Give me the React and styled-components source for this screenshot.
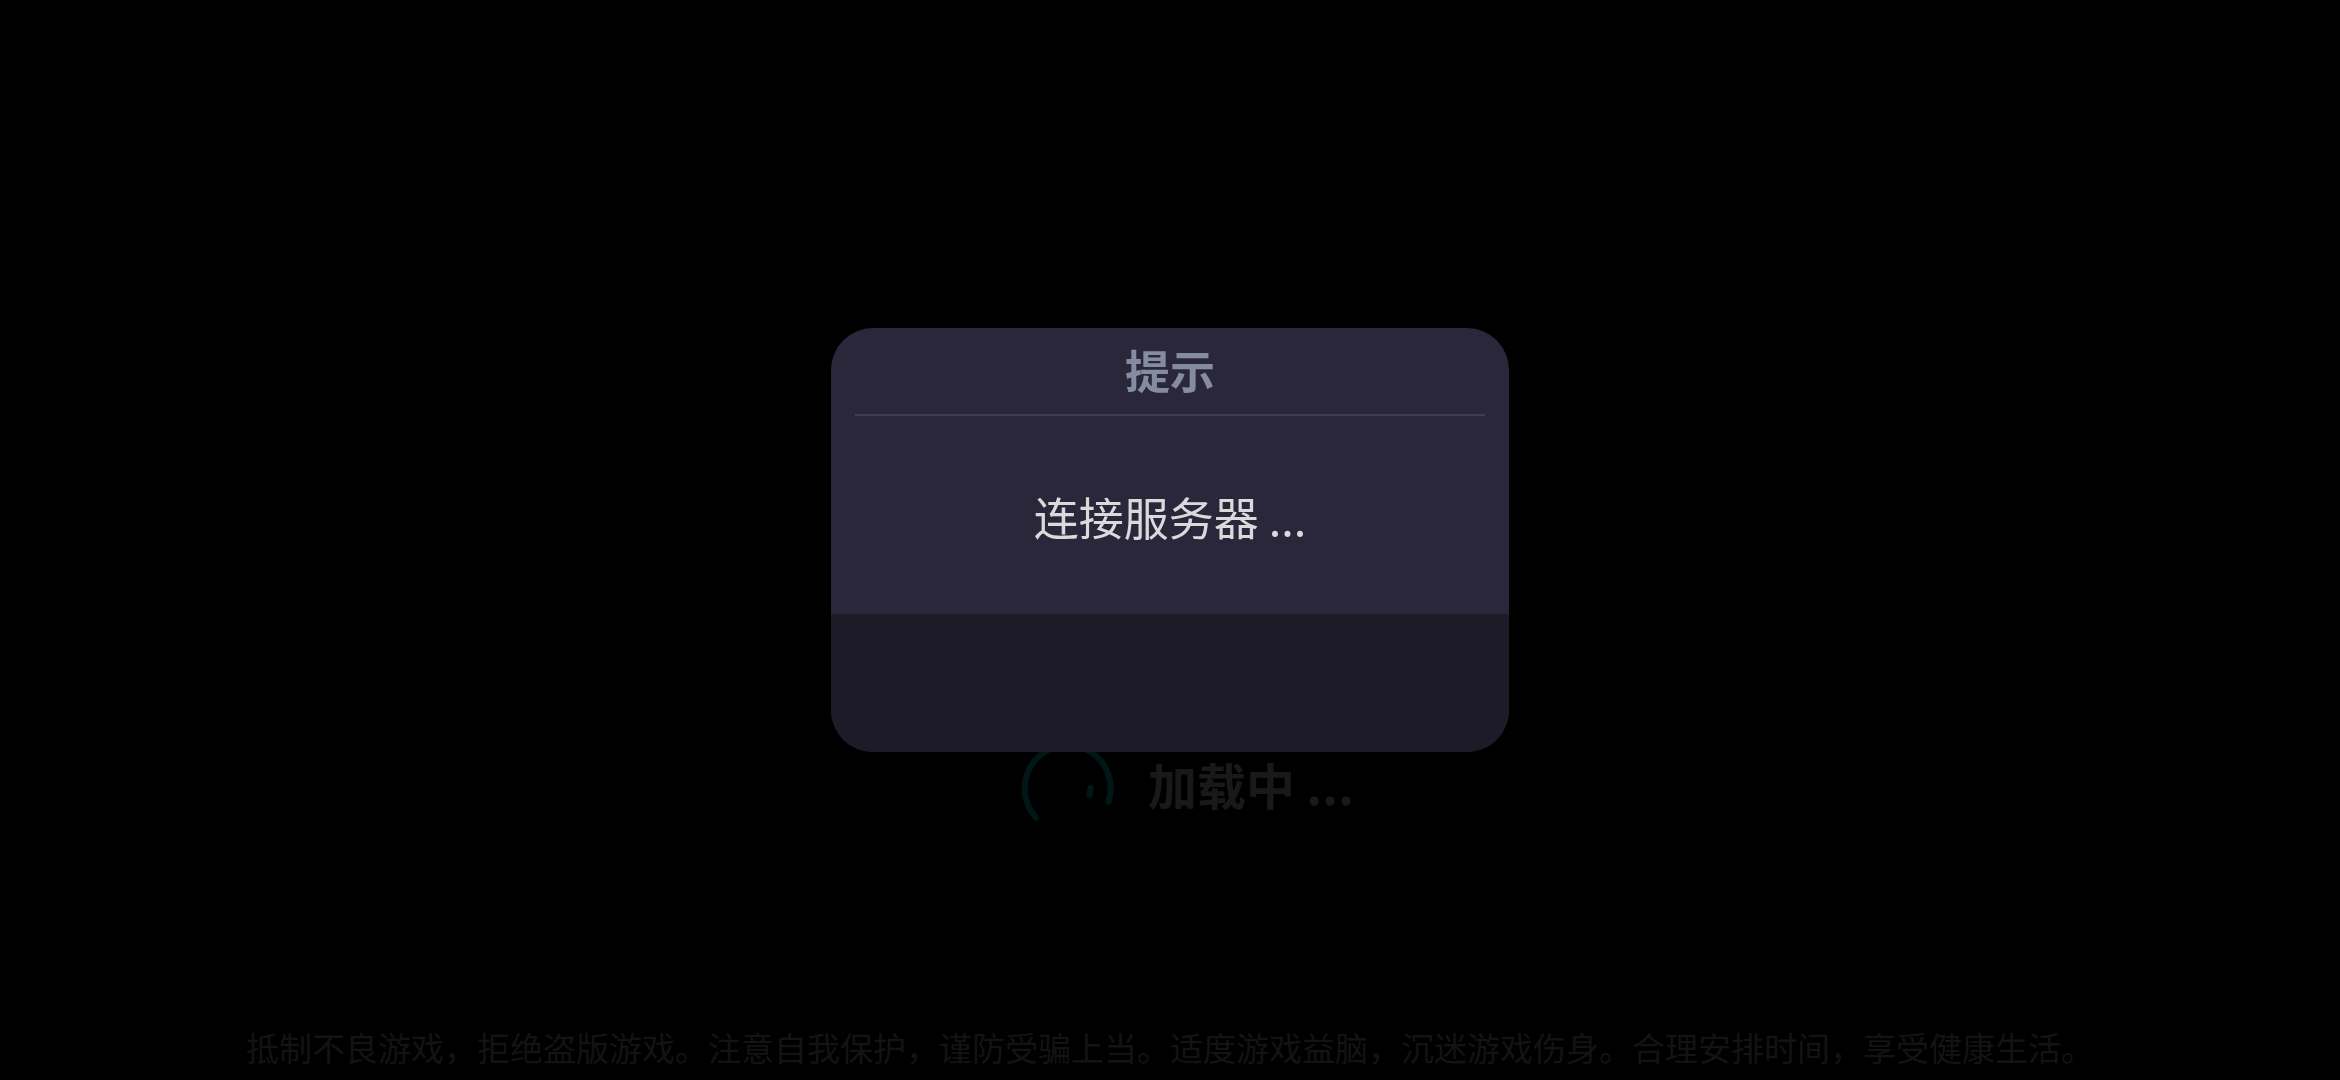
import React from 'react';
import styled, { createGlobalStyle } from 'styled-components';

export default function App() {
    return (
        <Screen>
            <GlobalStyle />
            <Loading role="status">
                <Spinner viewBox="0 0 92 92" aria-hidden="true">
                    <path d="M14 74.5 A43 43 0 1 1 86.5 59" />
                    <path d="M68.5 45 Q68.5 49 67.5 52" />
                </Spinner>
                <LoadingText>加载中 ...</LoadingText>
            </Loading>
            <Notice>
                抵制不良游戏，拒绝盗版游戏。注意自我保护，谨防受骗上当。适度游戏益脑，沉迷游戏伤身。合理安排时间，享受健康生活。
            </Notice>

            <Overlay>
                <Dialog role="dialog" aria-labelledby="dialog-title">
                    <DialogTitle id="dialog-title">提示</DialogTitle>
                    <DialogBody>连接服务器 ...</DialogBody>
                    <DialogFooter />
                </Dialog>
            </Overlay>
        </Screen>
    );
}

// styles
const GlobalStyle = createGlobalStyle`
    body {
        background-color: #000000;
        font-family: 'Noto Sans CJK SC', sans-serif;
        margin: 0;
    }
`;

const Screen = styled.main`
    align-items: center;
    box-sizing: border-box;
    display: flex;
    flex-direction: column;
    justify-content: flex-end;
    min-height: 100vh;
    padding-bottom: 8px;
`;

const Loading = styled.div`
    align-items: center;
    display: flex;
    gap: 34px;
    margin-bottom: 187px;
    padding-left: 36px;
`;

const Spinner = styled.svg`
    fill: none;
    height: 92px;
    stroke: #001716;
    stroke-linecap: round;
    stroke-width: 6px;
    width: 92px;
`;

const LoadingText = styled.span`
    color: #18191b;
    font-size: 49px;
    font-weight: 700;
    line-height: 72px;
    padding-bottom: 10px;
`;

const Notice = styled.p`
    color: #131313;
    font-size: 33px;
    line-height: 50px;
    margin: 0;
    text-align: center;
`;

const Overlay = styled.div`
    align-items: center;
    display: flex;
    inset: 0;
    justify-content: center;
    position: fixed;
`;

const Dialog = styled.section`
    background-color: #2a273b;
    border-radius: 42px;
    overflow: hidden;
    width: 29%;
`;

const DialogTitle = styled.h1`
    border-bottom: 2px solid #403c50;
    color: #858ca1;
    font-size: 45px;
    font-weight: 700;
    line-height: 84px;
    margin: 0 24px;
    padding-bottom: 2px;
    text-align: center;
`;

const DialogBody = styled.p`
    color: #dadadc;
    font-size: 45px;
    line-height: 66px;
    margin: 0;
    padding: 68px 24px 64px;
    text-align: center;
`;

const DialogFooter = styled.footer`
    background-color: #1e1b28;
    height: 138px;
`;
